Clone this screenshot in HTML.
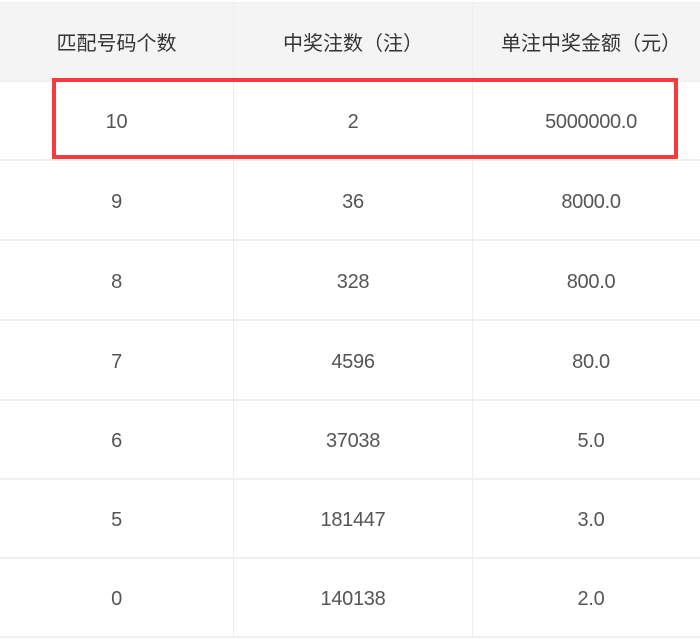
<!DOCTYPE html>
<html><head><meta charset="utf-8"><style>
html,body{margin:0;padding:0;width:700px;height:639px;overflow:hidden;background:#fff;}
body{font-family:"Liberation Sans","Noto Sans CJK SC",sans-serif;position:relative;}
.row{position:absolute;left:0;width:700px;height:79px;border-bottom:2px solid #f0f0f0;}
.hd{background:#f4f4f4;top:2px;height:77px;border-top:1px solid #eee;}
.c{position:absolute;top:0;height:100%;display:flex;align-items:center;justify-content:center;font-size:20px;color:#555;box-sizing:border-box;padding-top:5px;letter-spacing:-0.3px;}
.hd .c{padding-top:0;color:#333;letter-spacing:0;}
.c1{left:0;width:233px;}
.c2{left:233px;width:240px;border-left:1px solid #eee;border-right:1px solid #eee;}
.c3{left:474px;width:234px;}
.box{position:absolute;left:52px;top:78px;width:618px;height:73px;border:4px solid #f73a3c;}
</style></head><body>
<div class="row hd"><div class="c c1">匹配号码个数</div><div class="c c2">中奖注数（注）</div><div class="c c3">单注中奖金额（元）</div></div>
<div class="row" style="top:80px"><div class="c c1">10</div><div class="c c2">2</div><div class="c c3">5000000.0</div></div>
<div class="row" style="top:160px"><div class="c c1">9</div><div class="c c2">36</div><div class="c c3">8000.0</div></div>
<div class="row" style="top:240px"><div class="c c1">8</div><div class="c c2">328</div><div class="c c3">800.0</div></div>
<div class="row" style="top:320px"><div class="c c1">7</div><div class="c c2">4596</div><div class="c c3">80.0</div></div>
<div class="row" style="top:399px"><div class="c c1">6</div><div class="c c2">37038</div><div class="c c3">5.0</div></div>
<div class="row" style="top:478px"><div class="c c1">5</div><div class="c c2">181447</div><div class="c c3">3.0</div></div>
<div class="row" style="top:557px"><div class="c c1">0</div><div class="c c2">140138</div><div class="c c3">2.0</div></div>
<div class="box"></div>
</body></html>
